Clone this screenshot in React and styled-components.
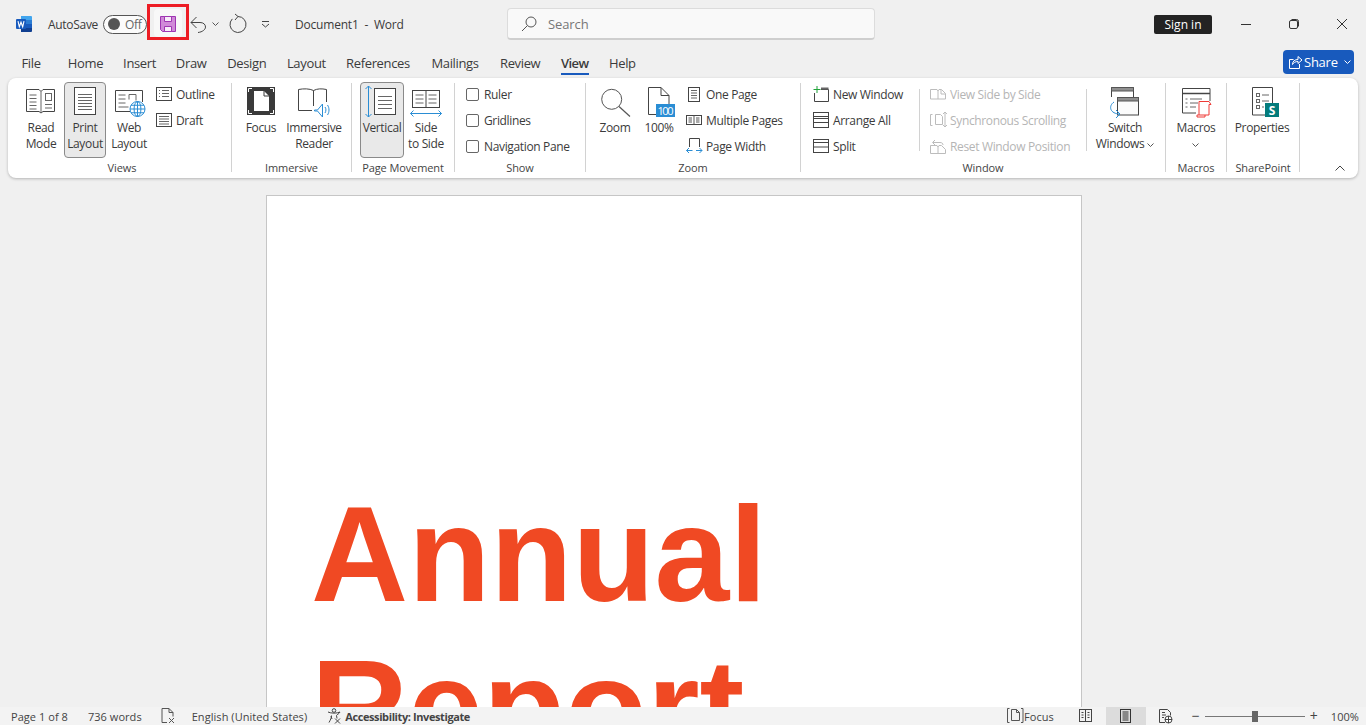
import React from "react";
import styled, { createGlobalStyle } from "styled-components";

const UI_FONT = `"Open Sans", "Noto Sans", sans-serif`;
const TABS = [
  { name: "Home", width: 35 },
  { name: "Insert", width: 32 },
  { name: "Draw", width: 30 },
  { name: "Design", width: 40 },
  { name: "Layout", width: 38 },
  { name: "References", width: 64 },
  { name: "Mailings", width: 49 },
  { name: "Review", width: 40 },
  { name: "View", width: 28 },
  { name: "Help", width: 26 },
];

const GlobalStyle = createGlobalStyle`
  * { box-sizing: border-box; }
  html, body { margin: 0; height: 100%; overflow: hidden; }
  body { font-family: ${UI_FONT}; font-size: 12px; color: #3b3b3b; background: #f0f0f0; }
  #root { height: 100%; }
`;

const Svg = styled.svg.attrs((p) => ({
  width: p.$w || p.$s || 32,
  height: p.$h || p.$s || 32,
  viewBox: `0 0 ${p.$w || p.$s || 32} ${p.$h || p.$s || 32}`,
}))`
  display: block;
  flex: none;
  overflow: visible;
  fill: none;
  stroke: ${(p) => p.$stroke || "#444"};
  stroke-width: 1;
`;

const BLUE = "#2a8dd4";
const DIM = "#bcbcbc";

const IconLabel = styled.text`
  font-family: ${UI_FONT};
  font-size: 11px;
  fill: #fff;
  stroke: none;
`;

const BadgeLabel = styled(IconLabel)`
  font-size: 12px;
  font-weight: 700;
`;

const Chevron = ({ color = "#555" }) => (
  <Svg $w={7} $h={4} $stroke={color}>
    <path d="M.5.5l3 3 3-3" />
  </Svg>
);

const WordLogo = () => (
  <Svg $s={16}>
    <path d="M5 0h10a1 1 0 0 1 1 1v3H5z" fill="#41a5ee" stroke="none" />
    <path d="M5 4h11v4H5z" fill="#2b7cd3" stroke="none" />
    <path d="M5 8h11v4H5z" fill="#185abd" stroke="none" />
    <path d="M5 12h11v3a1 1 0 0 1-1 1H5z" fill="#103f91" stroke="none" />
    <rect x="0" y="3" width="10" height="10" rx="1" fill="#185abd" stroke="none" />
    <path d="M2 5.2l1.3 5.6 1.7-4.6 1.7 4.6L8 5.2" stroke="#fff" strokeWidth="1.1" />
  </Svg>
);

const SaveIcon = () => (
  <Svg $s={16} $stroke="#9e35b2">
    <path d="M.5.5h15v15H2.500l-2-2z" fill="#d08ad8" />
    <path d="M4.500.5h7v5h-7z" fill="#f8ebf9" />
    <path d="M4.500 10.500h7v5h-7z" fill="#f8ebf9" />
  </Svg>
);

const UndoIcon = () => (
  <Svg $s={16} $stroke="#444">
    <path d="M6.500 1L1 6.500 6.500 12" />
    <path d="M1 6.500h9c3.500 0 5.500 2 5.500 4.500S12.500 16 8 16.500" />
  </Svg>
);

const RedoIcon = () => (
  <Svg $w={18} $h={18} $stroke="#444">
    <path d="M3.300 3.900A8 8 0 1 0 9 1.500" />
    <path d="M6 -1l3 2.500L6 5" />
  </Svg>
);

const CustomizeIcon = () => (
  <Svg $w={9} $h={7} $stroke="#444">
    <path d="M1 .5h7M1 3l3.500 3L8 3" />
  </Svg>
);

const SearchIcon = () => (
  <Svg $s={16} $stroke="#555">
    <circle cx="10" cy="6" r="5" />
    <path d="M6.400 9.600L1 15" />
  </Svg>
);

const MinIcon = () => (
  <Svg $w={10} $h={10} $stroke="#333">
    <path d="M0 5.500h10" />
  </Svg>
);
const RestoreIcon = () => (
  <Svg $w={10} $h={10} $stroke="#333">
    <rect x=".5" y="1.500" width="8" height="8" rx="1.500" />
    <path d="M2.500 .5h5a2 2 0 0 1 2 2v5" />
  </Svg>
);
const CloseIcon = () => (
  <Svg $w={10} $h={10} $stroke="#333">
    <path d="M0 0l10 10M10 0L0 10" />
  </Svg>
);

const ShareIcon = () => (
  <Svg $s={16} $stroke="#fff">
    <path d="M5.500 5.500h-4v9h10V10" />
    <path d="M4.500 10.500c0-3.500 2.500-5 5.500-5V2.500l4 3.500-4 3.500V7.500c-2.500 0-4.500 1-5.500 3z" />
  </Svg>
);

const ReadModeIcon = () => (
  <Svg>
    <path d="M16 5.500L14 3.500H1.500v22H14l2 1.500 2-1.500h11.500v-22H18z" />
    <path d="M16 5.500V27M4.500 9h7M4.500 12.500h7M4.500 16h7M4.500 19.500h7M4.500 23h7M20 18.500h7M20 22h7" stroke="#666" />
    <rect x="20.500" y="7.500" width="6" height="7" stroke="#666" />
  </Svg>
);

const PrintLayoutIcon = () => (
  <Svg>
    <rect x="5.500" y="1.500" width="21" height="27" fill="#fff" />
    <path d="M9 8.500h14M9 11.500h14M9 14.500h14M9 17.500h14M9 20.500h14M9 23.500h14" stroke="#666" />
  </Svg>
);

const Globe = ({ cx, cy, r }) => (
  <g stroke={BLUE}>
    <circle cx={cx} cy={cy} r={r} fill="#fff" />
    <ellipse cx={cx} cy={cy} rx={r / 2.2} ry={r} />
    <path d={`M${cx - r} ${cy}h${r * 2}M${cx} ${cy - r}v${r * 2}M${cx - r + 1} ${cy - r / 2}h${r * 2 - 2}M${cx - r + 1} ${cy + r / 2}h${r * 2 - 2}`} />
  </g>
);

const WebLayoutIcon = () => (
  <Svg>
    <path d="M17 25.500H2.500v-21h27V16" />
    <path d="M5.500 9h7M5.500 13h7M5.500 17h7M5.500 21h10M16 13.500V8.500h7v6" stroke="#666" />
    <Globe cx={24.5} cy={23} r={7.5} />
  </Svg>
);

const FocusIcon = () => (
  <Svg>
    <rect x="2" y="1" width="28" height="28" fill="#3a3a3a" stroke="none" />
    <path d="M9 5h10l5 5v15H9z" fill="#fff" stroke="none" />
    <path d="M19 5v5h5" stroke="#3a3a3a" />
    <path d="M3.500 6V2.500H7M25 2.500h3.500V6M3.500 24v3.500H7M25 27.500h3.500V24" stroke="#fff" />
  </Svg>
);

const ReaderIcon = () => (
  <Svg>
    <path d="M14 24.500H.5v-21c5-1 11-1 15 1 4-2 8-2 13-1V16" />
    <path d="M15.500 4.500V20" />
    <path d="M16.500 24h3l5-6v13l-5-6h-3z" stroke={BLUE} fill="#fff" />
    <path d="M27 21c1.200 1.500 1.200 4 0 6M29.500 19c2 3 2 7 0 10" stroke={BLUE} />
  </Svg>
);

const VerticalIcon = () => (
  <Svg>
    <path d="M2.500 0v31M-.5 3l3-3 3 3M-.5 28l3 3 3-3" stroke={BLUE} />
    <rect x="8.500" y="2.500" width="21" height="26" fill="#fff" />
    <path d="M12 10.500h14M12 14.500h14M12 18.500h14M12 22.500h14" stroke="#666" />
  </Svg>
);

const SideToSideIcon = () => (
  <Svg>
    <rect x="2.500" y="4.500" width="27" height="17" fill="#fff" />
    <path d="M16 4.500v17" />
    <path d="M5.500 9h8M5.500 13h8M5.500 17h8M18.500 9h8M18.500 13h8M18.500 17h8" stroke="#666" />
    <path d="M.5 27.500h31M3.500 24.500l-3 3 3 3M28.500 24.500l3 3-3 3" stroke={BLUE} />
  </Svg>
);

const OutlineIcon = () => (
  <Svg $s={16}>
    <rect x=".5" y="1.500" width="15" height="13" />
    <path d="M3 4.500h1M3 7.500h1M3 10.500h1M6 4.500h7M6 7.500h7M6 10.500h7" stroke="#666" />
  </Svg>
);

const DraftIcon = () => (
  <Svg $s={16}>
    <rect x=".5" y="1.500" width="15" height="13" />
    <path d="M3 4.500h10M3 7h10M3 9.500h10M3 12h10" stroke="#666" />
  </Svg>
);

const ZoomIcon = () => (
  <Svg $stroke="#555">
    <circle cx="12.700" cy="13.300" r="10" />
    <path d="M20 20.500L31 30.500" strokeWidth="1.200" />
  </Svg>
);

const FullIcon = () => (
  <Svg>
    <path d="M13 28.500H5.500v-27H18l8 8V18" fill="#fff" />
    <path d="M18 1.500v8h8" />
    <rect x="13" y="18" width="19" height="13" fill={BLUE} stroke="none" />
    <IconLabel x="14.500" y="29" textLength="16">100</IconLabel>
  </Svg>
);

const OnePageIcon = () => (
  <Svg $s={16}>
    <rect x="2.500" y="1.500" width="11" height="14" />
    <path d="M5 4.500h6M5 7h6M5 9.500h6M5 12h6" stroke="#666" />
  </Svg>
);

const MultiPageIcon = () => (
  <Svg $s={16}>
    <rect x=".5" y="3.500" width="15" height="9" />
    <path d="M8 3.500v9M2.500 6h3.500M2.500 8h3.500M2.500 10h3.500M10 6h3.500M10 8h3.500M10 10h3.500" stroke="#555" />
  </Svg>
);

const PageWidthIcon = () => (
  <Svg $s={16}>
    <path d="M3.500 9V.5h10V9" />
    <path d="M.5 12.500h6M10 12.500h6M3 10l-2.500 2.500L3 15M13.500 10l2.500 2.500L13.500 15" stroke={BLUE} />
  </Svg>
);

const NewWindowIcon = () => (
  <Svg $s={16}>
    <path d="M1.500 7v8.500h14V3.500H8" />
    <path d="M8 2.500h7.500" strokeWidth="2" stroke="#666" />
    <path d="M4 0v7M.5 3.500h7" stroke="#21a33a" />
  </Svg>
);

const ArrangeIcon = () => (
  <Svg $s={16}>
    <rect x=".5" y=".5" width="15" height="15" />
    <path d="M.5 4.500h15M.5 6.500h15M.5 10.500h15" />
  </Svg>
);

const SplitIcon = () => (
  <Svg $s={16}>
    <rect x=".5" y="1.500" width="15" height="13" />
    <path d="M.5 4.500h15M.5 9h15" />
  </Svg>
);

const SideBySideIcon = () => (
  <Svg $s={16} $stroke={DIM}>
    <path d="M.5 13V3.500h6.500L8 5l1-1.500h2.500l4 4V13z" />
    <path d="M8 5v8M11 4v4h4.500" />
  </Svg>
);

const SyncIcon = () => (
  <Svg $s={16} $stroke={DIM}>
    <path d="M2.500 2.500h-2v11h2M5.500 12.500v-10h5l2 2v8z" />
    <path d="M15 0v15M13 2l2-2 2 2M13 13l2 2 2-2" />
  </Svg>
);

const ResetIcon = () => (
  <Svg $s={16} $stroke={DIM}>
    <path d="M.5 15.500V7.500h6.500L8 9l1-1.500h2.500l4 4v4zM8 9v6.500" />
    <path d="M3 4.500h7c2 0 3 1 3 2.500M5 2L2.500 4.500 5 7" />
  </Svg>
);

const SwitchIcon = () => (
  <Svg>
    <path d="M2.500 11V1.500h22v10" />
    <path d="M2.500 1.500h22V5h-22z" fill="#8f8f8f" stroke="#555" />
    <rect x="8.500" y="11.500" width="21" height="17.500" fill="#fbfbfb" />
    <path d="M8.500 11.500h21V15h-21z" fill="#8f8f8f" stroke="#555" />
    <path d="M5 16c-6 4-4 12 6 12M7 24l4 4-4 4" stroke={BLUE} />
  </Svg>
);

const MacrosIcon = () => (
  <Svg>
    <path d="M16 27H2.500V2.500H30V15" />
    <path d="M2.500 7.500H30" strokeWidth="1.500" />
    <path d="M5.500 13h2M10 13h12M5.500 17h2M10 17h8M5.500 21h2M10 21h6" stroke="#666" />
    <path d="M19 15.500h10l2 3h-2V29h-12M19 15.500v13.500M17 29v2h8v-2" stroke="#ee3a36" fill="#fff" />
  </Svg>
);

const PropertiesIcon = () => (
  <Svg>
    <path d="M19 29H6.500V1.500h20V17" />
    <rect x="10.500" y="7.500" width="3" height="3" stroke="#666" />
    <rect x="10.500" y="13.500" width="3" height="3" stroke="#666" />
    <rect x="10.500" y="19.500" width="3" height="3" stroke="#666" />
    <path d="M16 9h7M16 15h7M16 21h2" stroke="#666" />
    <rect x="19" y="17" width="14" height="14" fill="#037c7c" stroke="none" />
    <BadgeLabel x="26" y="28.500" textAnchor="middle">S</BadgeLabel>
  </Svg>
);

const ProofIcon = () => (
  <Svg $s={16} $stroke="#555">
    <path d="M6 14.500H1V.5h7l4 4v4M8 .5v4h4" />
    <path d="M8 10l5 5M13 10l-5 5" />
  </Svg>
);

const AccessIcon = () => (
  <Svg $s={16} $stroke="#444">
    <circle cx="7" cy="2.500" r="1.800" />
    <path d="M1 4c3 1.500 9 1.500 12 0-1 2-3 2.500-3.500 3.500l.5 3M4.500 7.500c0 2-1 4.500-2.500 7M4 8l1 3" />
    <path d="M8 10.500l5 5M13 10.500l-5 5" />
  </Svg>
);

const StatusFocusIcon = () => (
  <Svg $s={16} $stroke="#555">
    <path d="M2.500.5H.5v14h2M14 .5h2v14h-2M4.500 12.500v-11h5l3 3v8zM9.500 1.500v3h3" />
  </Svg>
);

const StatusReadIcon = () => (
  <Svg $s={14} $stroke="#444">
    <rect x=".5" y=".5" width="12" height="12" />
    <path d="M6.500.5v12M2.500 3.500h2M2.500 6h2M2.500 8.500h2M8.500 3.500h2M8.500 6h2M8.500 8.500h2" />
  </Svg>
);

const StatusPrintIcon = () => (
  <Svg $s={14} $stroke="#333">
    <rect x="1.500" y=".5" width="10" height="13" />
    <path d="M3.500 3h6M3.500 5h6M3.500 7h6M3.500 9h6M3.500 11h6" />
  </Svg>
);

const StatusWebIcon = () => (
  <Svg $s={14} $stroke="#444">
    <path d="M6 13.500H.5V.5h8l3 3v3" />
    <path d="M3 3.500h3M3 6h4M3 8.500h2" />
    <circle cx="9.500" cy="10.500" r="3.500" fill="#fff" />
    <path d="M6 10.500h7M9.500 7v7" />
  </Svg>
);

const App = () => (
  <>
    <GlobalStyle />
    <Window>
      <TitleBar>
        <LogoSlot>
          <WordLogo />
        </LogoSlot>
        <AutoSaveLabel>AutoSave</AutoSaveLabel>
        <Toggle>
          <ToggleKnob />
          <span>Off</span>
        </Toggle>
        <SaveHighlight>
          <SaveInner>
            <SaveIcon />
          </SaveInner>
        </SaveHighlight>
        <QuickAction $ml={1} $w={16}>
          <UndoIcon />
        </QuickAction>
        <QuickAction $ml={6} $w={7}>
          <Chevron />
        </QuickAction>
        <QuickAction $ml={10} $w={18}>
          <RedoIcon />
        </QuickAction>
        <QuickAction $ml={14} $w={9}>
          <CustomizeIcon />
        </QuickAction>
        <DocTitle>Document1&nbsp; -&nbsp; Word</DocTitle>
        <SearchBox>
          <SearchIcon />
          <span>Search</span>
        </SearchBox>
        <SignIn>Sign in</SignIn>
        <WindowButton $ml={29}>
          <MinIcon />
        </WindowButton>
        <WindowButton $ml={38}>
          <RestoreIcon />
        </WindowButton>
        <WindowButton $ml={38}>
          <CloseIcon />
        </WindowButton>
      </TitleBar>

      <TabRow>
        <FileTab $w={18}>File</FileTab>
        {TABS.map((t) => (
          <Tab key={t.name} $w={t.width} $active={t.name === "View"}>
            {t.name}
          </Tab>
        ))}
        <ShareButton>
          <ShareIcon />
          <span>Share</span>
          <Chevron color="#fff" />
        </ShareButton>
      </TabRow>

      <Ribbon>
        <Group $w={219}>
          <GroupBody $pl={7}>
            <BigButton $w={42}>
              <ReadModeIcon />
              <BigLabel>
                Read
                <br />
                Mode
              </BigLabel>
            </BigButton>
            <BigButton $w={42} $ml={2} $active>
              <PrintLayoutIcon />
              <BigLabel>
                Print
                <br />
                Layout
              </BigLabel>
            </BigButton>
            <BigButton $w={42} $ml={2}>
              <WebLayoutIcon />
              <BigLabel>
                Web
                <br />
                Layout
              </BigLabel>
            </BigButton>
            <SmallColumn $ml={6} $w={64}>
              <SmallItem>
                <OutlineIcon />
                Outline
              </SmallItem>
              <SmallItem>
                <DraftIcon />
                Draft
              </SmallItem>
            </SmallColumn>
          </GroupBody>
          <GroupLabel>Views</GroupLabel>
        </Group>

        <Group $w={120}>
          <GroupBody $pl={9}>
            <BigButton $w={40}>
              <FocusIcon />
              <BigLabel>Focus</BigLabel>
            </BigButton>
            <BigButton $w={60} $ml={3}>
              <ReaderIcon />
              <BigLabel>
                Immersive
                <br />
                Reader
              </BigLabel>
            </BigButton>
          </GroupBody>
          <GroupLabel>Immersive</GroupLabel>
        </Group>

        <Group $w={103}>
          <GroupBody $pl={8}>
            <BigButton $w={44} $active>
              <VerticalIcon />
              <BigLabel>Vertical</BigLabel>
            </BigButton>
            <BigButton $w={42} $ml={1}>
              <SideToSideIcon />
              <BigLabel>
                Side
                <br />
                to Side
              </BigLabel>
            </BigButton>
          </GroupBody>
          <GroupLabel>Page Movement</GroupLabel>
        </Group>

        <Group $w={131}>
          <GroupBody $pl={11}>
            <SmallColumn $w={118}>
              <SmallItem $gap={5}>
                <CheckBox />
                Ruler
              </SmallItem>
              <SmallItem $gap={5}>
                <CheckBox />
                Gridlines
              </SmallItem>
              <SmallItem $gap={5}>
                <CheckBox />
                Navigation Pane
              </SmallItem>
            </SmallColumn>
          </GroupBody>
          <GroupLabel>Show</GroupLabel>
        </Group>

        <Group $w={215}>
          <GroupBody $pl={9}>
            <BigButton $w={40}>
              <ZoomIcon />
              <BigLabel>Zoom</BigLabel>
            </BigButton>
            <BigButton $w={40} $ml={4}>
              <FullIcon />
              <BigLabel>100%</BigLabel>
            </BigButton>
            <SmallColumn $ml={7} $w={110}>
              <SmallItem>
                <OnePageIcon />
                One Page
              </SmallItem>
              <SmallItem>
                <MultiPageIcon />
                Multiple Pages
              </SmallItem>
              <SmallItem>
                <PageWidthIcon />
                Page Width
              </SmallItem>
            </SmallColumn>
          </GroupBody>
          <GroupLabel>Zoom</GroupLabel>
        </Group>

        <Group $w={365}>
          <GroupBody $pl={12}>
            <SmallColumn $w={106}>
              <SmallItem>
                <NewWindowIcon />
                New Window
              </SmallItem>
              <SmallItem>
                <ArrangeIcon />
                Arrange All
              </SmallItem>
              <SmallItem>
                <SplitIcon />
                Split
              </SmallItem>
            </SmallColumn>
            <InnerDivider />
            <SmallColumn $ml={10} $w={156}>
              <SmallItem $disabled>
                <SideBySideIcon />
                View Side by Side
              </SmallItem>
              <SmallItem $disabled>
                <SyncIcon />
                Synchronous Scrolling
              </SmallItem>
              <SmallItem $disabled>
                <ResetIcon />
                Reset Window Position
              </SmallItem>
            </SmallColumn>
            <InnerDivider />
            <BigButton $w={60} $ml={8}>
              <SwitchIcon />
              <BigLabel>
                Switch
                <br />
                Windows <InlineChevron><Chevron /></InlineChevron>
              </BigLabel>
            </BigButton>
          </GroupBody>
          <GroupLabel>Window</GroupLabel>
        </Group>

        <Group $w={61}>
          <GroupBody>
            <BigButton $w={60}>
              <MacrosIcon />
              <BigLabel>
                Macros
                <br />
                <InlineChevron><Chevron /></InlineChevron>
              </BigLabel>
            </BigButton>
          </GroupBody>
          <GroupLabel>Macros</GroupLabel>
        </Group>

        <Group $w={73}>
          <GroupBody $pl={5}>
            <BigButton $w={60}>
              <PropertiesIcon />
              <BigLabel>Properties</BigLabel>
            </BigButton>
          </GroupBody>
          <GroupLabel>SharePoint</GroupLabel>
        </Group>

        <Collapse>
          <Svg $w={10} $h={6} $stroke="#444">
            <path d="M.5 5.500l4.500-4.500 4.500 4.500" />
          </Svg>
        </Collapse>
      </Ribbon>

      <DocArea>
        <Page>
          <Heading>
            Annual
            <br />
            Report
          </Heading>
        </Page>
      </DocArea>

      <StatusBar>
        <StatusText $ml={11}>Page 1 of 8</StatusText>
        <StatusText $ml={20}>736 words</StatusText>
        <StatusSlot $ml={19}>
          <ProofIcon />
        </StatusSlot>
        <StatusText $ml={15}>English (United States)</StatusText>
        <StatusSlot $ml={20}>
          <AccessIcon />
        </StatusSlot>
        <StatusText $ml={2} $bold>
          Accessibility: Investigate
        </StatusText>
        <StatusRight>
          <StatusSlot>
            <StatusFocusIcon />
          </StatusSlot>
          <StatusText $ml={1}>Focus</StatusText>
          <ViewButton $ml={12}>
            <StatusReadIcon />
          </ViewButton>
          <ViewButton $active>
            <StatusPrintIcon />
          </ViewButton>
          <ViewButton>
            <StatusWebIcon />
          </ViewButton>
          <ZoomSign $ml={5}>−</ZoomSign>
          <ZoomTrack>
            <ZoomThumb />
          </ZoomTrack>
          <ZoomSign>+</ZoomSign>
          <StatusText $ml={12}>100%</StatusText>
        </StatusRight>
      </StatusBar>
    </Window>
  </>
);

const Window = styled.div`
  height: 100%;
  display: flex;
  flex-direction: column;
  overflow: hidden;
  background: #f0f0f0;
`;

const TitleBar = styled.header`
  height: 48px;
  flex: none;
  display: flex;
  align-items: center;
  padding: 0 19px 0 16px;
`;

const LogoSlot = styled.div`
  width: 16px;
`;

const AutoSaveLabel = styled.span`
  margin-left: 16px;
  width: 55px;
  letter-spacing: -0.3px;
  white-space: nowrap;
`;

const Toggle = styled.div`
  width: 44px;
  height: 19px;
  border: 1px solid #555;
  border-radius: 10px;
  display: flex;
  align-items: center;
  padding: 0 3px 0 4px;
  gap: 5px;
  color: #666;
  background: #fbfbfb;
  letter-spacing: -0.3px;
`;

const ToggleKnob = styled.span`
  width: 12px;
  height: 12px;
  flex: none;
  border-radius: 50%;
  background: #555;
`;

const SaveHighlight = styled.div`
  width: 42px;
  height: 36px;
  margin-top: -4px;
  flex: none;
  border: 3px solid #ed1c24;
  display: flex;
  align-items: center;
  justify-content: center;
`;

const SaveInner = styled.div`
  width: 28px;
  height: 28px;
  margin-top: 2px;
  padding-top: 2px;
  border-radius: 4px;
  background: #f8f8f8;
  display: flex;
  align-items: center;
  justify-content: center;
`;

const QuickAction = styled.div`
  margin-left: ${(p) => p.$ml}px;
  width: ${(p) => p.$w}px;
  flex: none;
  display: flex;
  justify-content: center;
`;

const DocTitle = styled.span`
  margin-left: 25px;
  width: 212px;
  flex: none;
  letter-spacing: -0.2px;
  white-space: nowrap;
`;

const SearchBox = styled.div`
  width: 368px;
  height: 32px;
  flex: none;
  background: #f9f9f9;
  border: 1px solid #dcdcdc;
  border-bottom: 2px solid #cfcfcf;
  border-radius: 4px;
  display: flex;
  align-items: center;
  padding-left: 13px;
  gap: 11px;
  font-size: 13px;
  color: #777;
  letter-spacing: -0.1px;
`;

const SignIn = styled.div`
  margin-left: auto;
  width: 58px;
  height: 19px;
  background: #232323;
  color: #fff;
  border-radius: 2px;
  display: flex;
  align-items: center;
  justify-content: center;
`;

const WindowButton = styled.div`
  margin-left: ${(p) => p.$ml}px;
  flex: none;
`;

const TabRow = styled.nav`
  height: 30px;
  flex: none;
  display: flex;
  align-items: center;
  padding: 0 12px 0 22px;
  gap: 20.6px;
  font-size: 13px;
`;

const Tab = styled.div`
  width: ${(p) => p.$w}px;
  height: 22px;
  margin-top: 1px;
  flex: none;
  display: flex;
  align-items: center;
  justify-content: center;
  border-bottom: 2px solid ${(p) => (p.$active ? "#185abd" : "transparent")};
  font-weight: ${(p) => (p.$active ? 600 : 400)};
  letter-spacing: ${(p) => (p.$active ? "-0.6px" : "-0.35px")};
  white-space: nowrap;
`;

const FileTab = styled(Tab)`
  margin-right: 7.4px;
`;

const ShareButton = styled.div`
  margin-left: auto;
  width: 71px;
  height: 24px;
  margin-top: -3px;
  background: #185abd;
  color: #fff;
  border-radius: 4px;
  display: flex;
  align-items: center;
  padding-left: 5px;
  letter-spacing: -0.25px;

  svg:last-child {
    margin-left: 6px;
  }
`;

const Ribbon = styled.section`
  height: 100px;
  flex: none;
  margin: 0 8px;
  padding: 5px 8px 6px 5px;
  background: #fff;
  border-radius: 8px;
  box-shadow: 0 1px 3px rgba(0, 0, 0, 0.25);
  display: flex;
  position: relative;
  z-index: 1;
`;

const Group = styled.div`
  width: ${(p) => p.$w}px;
  flex: none;
  border-right: 1px solid #d2d2d2;
  display: flex;
  flex-direction: column;
`;

const GroupBody = styled.div`
  flex: 1;
  display: flex;
  align-items: flex-start;
  margin-top: -1px;
  padding-left: ${(p) => p.$pl || 0}px;
`;

const GroupLabel = styled.div`
  height: 12px;
  margin-bottom: -2px;
  font-size: 11px;
  line-height: 12px;
  text-align: center;
  letter-spacing: -0.1px;
  color: #444;
  white-space: nowrap;
`;

const BigButton = styled.div`
  width: ${(p) => p.$w}px;
  height: 76px;
  margin-left: ${(p) => p.$ml || 0}px;
  flex: none;
  border: 1px solid ${(p) => (p.$active ? "#8a8a8a" : "transparent")};
  border-radius: 4px;
  background: ${(p) => (p.$active ? "#e9e9e9" : "transparent")};
  padding-top: 3px;
  display: flex;
  flex-direction: column;
  align-items: center;
`;

const BigLabel = styled.div`
  margin-top: 2px;
  line-height: 16px;
  letter-spacing: -0.35px;
  text-align: center;
  white-space: nowrap;
`;

const InlineChevron = styled.span`
  display: inline-block;
  vertical-align: middle;
  line-height: 0;
`;

const SmallColumn = styled.div`
  width: ${(p) => p.$w}px;
  margin-left: ${(p) => p.$ml || 0}px;
  margin-top: -1px;
  flex: none;
  display: flex;
  flex-direction: column;
`;

const SmallItem = styled.div`
  height: 26px;
  display: flex;
  align-items: center;
  gap: ${(p) => p.$gap || 4}px;
  letter-spacing: -0.35px;
  white-space: nowrap;
  color: ${(p) => (p.$disabled ? "#b5b5b5" : "inherit")};
`;

const CheckBox = styled.span`
  width: 13px;
  height: 13px;
  flex: none;
  border: 1px solid #666;
  border-radius: 2px;
  background: #fff;
`;

const InnerDivider = styled.div`
  width: 1px;
  height: 62px;
  margin-top: 7px;
  flex: none;
  background: #d2d2d2;
`;

const Collapse = styled.div`
  margin-left: auto;
  margin-right: 5px;
  align-self: flex-end;
  margin-bottom: 1px;
`;

const DocArea = styled.main`
  flex: 1;
  min-height: 0;
  overflow: hidden;
  display: flex;
  justify-content: center;
  padding: 17px 18px 0 0;
`;

const Page = styled.article`
  width: 816px;
  height: 1056px;
  flex: none;
  background: #fff;
  border: 1px solid #c6c6c6;
  padding: 282px 0 0 44px;
`;

const Heading = styled.h1`
  margin: 0;
  font-family: "Liberation Sans", Arial, sans-serif;
  font-size: 134.5px;
  line-height: 153px;
  font-weight: 700;
  color: #f04923;
`;

const StatusBar = styled.footer`
  height: 18px;
  flex: none;
  background: #f3f3f3;
  display: flex;
  align-items: center;
  font-size: 11px;
  color: #444;
`;

const StatusText = styled.span`
  margin-left: ${(p) => p.$ml || 0}px;
  font-weight: ${(p) => (p.$bold ? 700 : 400)};
  letter-spacing: ${(p) => (p.$bold ? "-0.4px" : "0.05px")};
  white-space: nowrap;
`;

const StatusSlot = styled.div`
  margin-left: ${(p) => p.$ml || 0}px;
  flex: none;
`;

const StatusRight = styled.div`
  margin-left: auto;
  padding-right: 7px;
  height: 100%;
  display: flex;
  align-items: center;
`;

const ViewButton = styled.div`
  width: 40px;
  height: 100%;
  margin-left: ${(p) => p.$ml || 0}px;
  background: ${(p) => (p.$active ? "#dcdcdc" : "transparent")};
  display: flex;
  align-items: center;
  justify-content: center;
`;

const ZoomSign = styled.span`
  width: 10px;
  margin-left: ${(p) => p.$ml || 0}px;
  font-size: 14px;
  line-height: 18px;
  text-align: center;
`;

const ZoomTrack = styled.div`
  width: 100px;
  height: 1px;
  margin: 0 4px;
  background: #777;
  position: relative;
`;

const ZoomThumb = styled.span`
  position: absolute;
  left: 47px;
  top: -5px;
  width: 6px;
  height: 11px;
  background: #666;
`;

export default App;
